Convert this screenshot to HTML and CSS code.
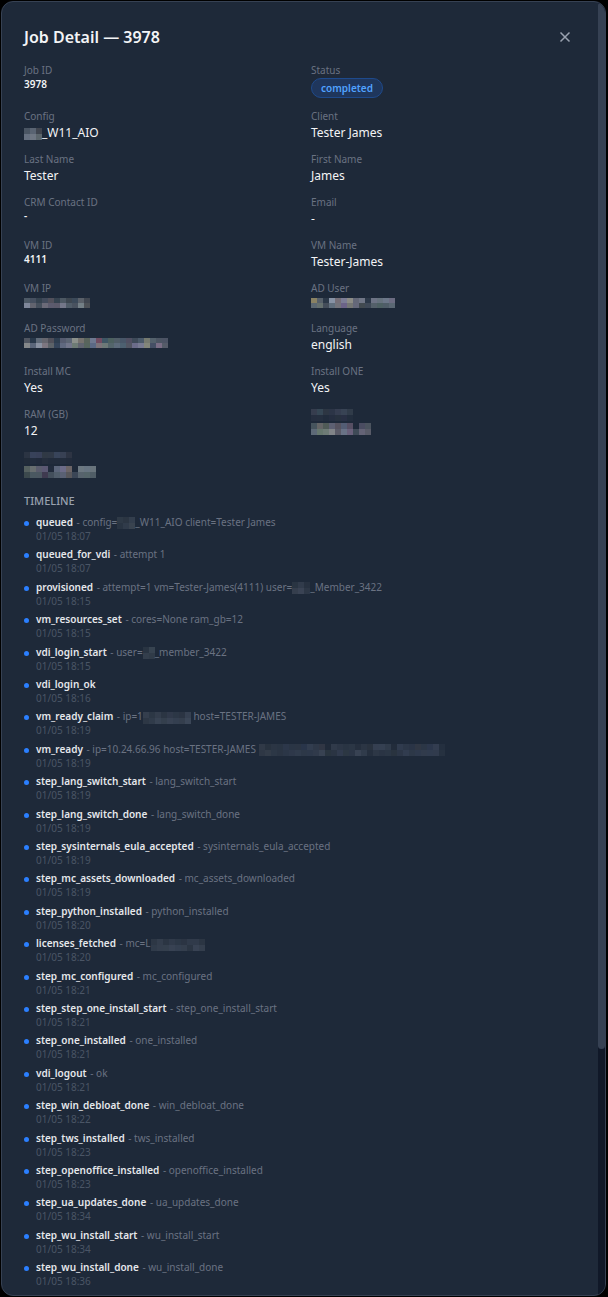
FILE: index.html
```
<!DOCTYPE html>
<html lang="en">
<head>
  <meta charset="UTF-8" />
  <meta name="viewport" content="width=device-width, initial-scale=1.0" />
  <title>Job Detail</title>
  <link rel="stylesheet" href="styles.css">
</head>
<body>
  <main class="modal">
    <div class="content">
      <header class="modal-header">
        <h1>Job Detail — 3978</h1>
        <button class="close" type="button" aria-label="Close">
          <svg width="12" height="12" viewBox="0 0 12 12"><path d="M1.5 1.5l9 9M10.5 1.5l-9 9" /></svg>
        </button>
      </header>

      <dl class="details">
        <div><dt>Job ID</dt><dd class="code">3978</dd></div>
        <div><dt>Status</dt><dd class="status"><span class="badge">completed</span></dd></div>
        <div><dt>Config</dt><dd><span class="mask" data-rows="4a5563 5a6472 40454f|667080 6f7783 5c666c"></span>_W11_AIO</dd></div>
        <div><dt>Client</dt><dd>Tester James</dd></div>
        <div><dt>Last Name</dt><dd>Tester</dd></div>
        <div><dt>First Name</dt><dd>James</dd></div>
        <div><dt>CRM Contact ID</dt><dd class="code">-</dd></div>
        <div><dt>Email</dt><dd>-</dd></div>
        <div><dt>VM ID</dt><dd class="code">4111</dd></div>
        <div><dt>VM Name</dt><dd>Tester-James</dd></div>
        <div><dt>VM IP</dt><dd class="hidden"><span class="mask short" data-rows="4d5966 465060 35424f 424b5c 51505b 35424f 4d5863 3d4650 3b4959 5a6069 404650|7f879a 62646f 454f5c 6b6a78 5c5b6e 5c5a6b 747789 505c68 49525f 737f86 4c5056"></span></dd></div>
        <div><dt>AD User</dt><dd class="hidden"><span class="mask short" data-rows="8a8263 57606a 2c3848 8792a5 766f78 7c7d96 8c8c86 646878 707686 2c3848 6d7385 66727e 6c7789 6c6c82|5c6872 65706f 444d5a 606e7d 73737b 6c6388 747674 65687a 424a50 3f4957 54606a 4d6063 4f5d68 5a6773"></span></dd></div>
        <div><dt>AD Password</dt><dd class="hidden"><span class="mask short" data-rows="505661 29384a 606a78 66666e 50505a 2e3e50 565c70 5d6675 8b908b 75726e 59645c 6e7890 704c62 3f5665 4c605f 505d67 485668 504f62 3e4a59 4b5a6a 767a70 54616c 4c5563 4c5364|85888a 5b667a 8991a1 7d7680 5c6268 34445a 606980 72768b 6d7b75 606470 56655e 5b6985 7c737a 6d7977 54656b 5c6a7a 4d6070 525562 6b6c8a 777a92 83867a 454f65 7a6d85 555b68"></span></dd></div>
        <div><dt>Language</dt><dd>english</dd></div>
        <div><dt>Install MC</dt><dd>Yes</dd></div>
        <div><dt>Install ONE</dt><dd>Yes</dd></div>
        <div><dt>RAM (GB)</dt><dd>12</dd></div>
        <div><dt><span class="mask" data-rows="363d4e 354654 2d3643 2c3547 353d50 384354 303b49|252e3f 252f3f 212c3c 252e40 27313f 282f43 222d3d"></span></dt><dd class="hidden"><span class="mask" data-rows="46545d 646566 505b57 5d6072 56535f 535d74 564f63 1e2939 4a4c61 4b535e|5d6977 66776e 6e7b76 818488 5b5b68 697286 69607b 3f4a57 646376 595b68"></span></dd></div>
        <div><dt><span class="mask" data-rows="2b3443 38425a 384058 303945 303947 38445a 384154 2d3443|212b39 222c3d 212a3b 252e3d 222c3c 222c3c 232d3d 222b3b"></span></dt><dd class="hidden"><span class="mask" data-rows="55605f 686e70 5a5c6d 5b5873 212b3c 5b657a 6c6b88 6c6567 1e2939 6c7881 687582 69747c|3c494d 4a5861 4b5761 3f3a50 434f5c 505d6b 5a6174 58575b 3b4656 57636d 55656a 505d66"></span></dd></div>
      </dl>

      <h2>Timeline</h2>
      <ul class="timeline">
        <li><p><b>queued</b> - config=<span class="mask" data-rows="2e3946 2b3542 333e4d|293442 303b4a 39434f"></span>_W11_AIO client=Tester James</p><time>01/05 18:07</time></li>
        <li><p><b>queued_for_vdi</b> - attempt 1</p><time>01/05 18:07</time></li>
        <li><p><b>provisioned</b> - attempt=1 vm=Tester-James(4111) user=<span class="mask" data-rows="293442 313b4b 273140|353e4d 3a4354 2d3746"></span>_Member_3422</p><time>01/05 18:15</time></li>
        <li><p><b>vm_resources_set</b> - cores=None ram_gb=12</p><time>01/05 18:15</time></li>
        <li><p><b>vdi_login_start</b> - user=<span class="mask" data-rows="293442 374350|333e4c 303b48"></span>_member_3422</p><time>01/05 18:15</time></li>
        <li><p><b>vdi_login_ok</b></p><time>01/05 18:16</time></li>
        <li><p><b>vm_ready_claim</b> - ip=1<span class="mask" data-rows="343e4d 2c3745 333d4c 2b3543 30394a 2c3746 2b3443 364051|2d3745 303b4a 384353 343f4d 384253 343f50 343e4d 3b4657"></span> host=TESTER-JAMES</p><time>01/05 18:19</time></li>
        <li><p><b>vm_ready</b> - ip=10.24.66.96 host=TESTER-JAMES <span class="mask" data-rows="303947 28323f 2b3544 293443 2c374a 2a3545 2b3544 29354a 323d4f 2e3848 303644 202a39 303a4a 2c3646 293443 2b3645 252f3e 2b3544 29323f 353f51 354052 303b4b 222c3b 303b4e 2c3748 2a3446 303744 2b3646 2c374c 333d50 242f3f|2e3745 323b48 2c3746 2a3443 2b3647 2e384a 303b4c 2d3848 2d384a 303a4b 384252 29343f 2a3443 303a4d 2c3743 2b3546 384253 303b4b 252f3e 2d3746 2a3444 2b3645 29333f 2c3647 313c4f 2d3848 2e394c 313b4c 303b4e 313b4d 263140"></span></p><time>01/05 18:19</time></li>
        <li><p><b>step_lang_switch_start</b> - lang_switch_start</p><time>01/05 18:19</time></li>
        <li><p><b>step_lang_switch_done</b> - lang_switch_done</p><time>01/05 18:19</time></li>
        <li><p><b>step_sysinternals_eula_accepted</b> - sysinternals_eula_accepted</p><time>01/05 18:19</time></li>
        <li><p><b>step_mc_assets_downloaded</b> - mc_assets_downloaded</p><time>01/05 18:19</time></li>
        <li><p><b>step_python_installed</b> - python_installed</p><time>01/05 18:20</time></li>
        <li><p><b>licenses_fetched</b> - mc=L<span class="mask" data-rows="2d3745 333d4c 2b3543 303a4a 2c3746 2b3443 303a4a 303a4a 2b3543|303b4a 343e4d 343f4d 384253 343f50 343e4d 2b3543 384253 343e4d"></span></p><time>01/05 18:20</time></li>
        <li><p><b>step_mc_configured</b> - mc_configured</p><time>01/05 18:21</time></li>
        <li><p><b>step_step_one_install_start</b> - step_one_install_start</p><time>01/05 18:21</time></li>
        <li><p><b>step_one_installed</b> - one_installed</p><time>01/05 18:21</time></li>
        <li><p><b>vdi_logout</b> - ok</p><time>01/05 18:21</time></li>
        <li><p><b>step_win_debloat_done</b> - win_debloat_done</p><time>01/05 18:22</time></li>
        <li><p><b>step_tws_installed</b> - tws_installed</p><time>01/05 18:23</time></li>
        <li><p><b>step_openoffice_installed</b> - openoffice_installed</p><time>01/05 18:23</time></li>
        <li><p><b>step_ua_updates_done</b> - ua_updates_done</p><time>01/05 18:34</time></li>
        <li><p><b>step_wu_install_start</b> - wu_install_start</p><time>01/05 18:34</time></li>
        <li><p><b>step_wu_install_done</b> - wu_install_done</p><time>01/05 18:36</time></li>
        <li><p><b>step_all_apps_completed_rebooted</b> - all_apps_completed_rebooted</p><time>01/05 18:36</time></li>
      </ul>
    </div>
    <div class="scrollbar"><div class="thumb"></div></div>
  </main>
  <script src="script.js"></script>
</body>
</html>
```
FILE: styles.css
```
* {
  box-sizing: border-box;
}
body {
  margin: 0;
  padding: 1px 2px 1px 1px;
  background: #000;
  color: #f3f4f6;
  font-family: "Segoe UI", "Noto Sans", sans-serif;
  font-size: 12px;
}
.modal {
  display: flex;
  height: calc(100vh - 2px);
  overflow: hidden;
  background: #1e2939;
  border: 1px solid #364153;
  border-radius: 12px;
}
.content {
  flex: 1;
  min-width: 0;
  display: flex;
  flex-direction: column;
  padding: 24px 22px 0;
}
.modal-header {
  display: flex;
  justify-content: space-between;
  align-items: center;
  height: 22px;
  margin-bottom: 15px;
}
h1 {
  margin: 0;
  font-size: 16px;
  font-weight: 600;
  color: #f3f4f6;
}
.close {
  display: flex;
  padding: 5px;
  border: none;
  background: none;
  cursor: pointer;
}
.close svg {
  fill: none;
  stroke: #99a1af;
  stroke-width: 1.5;
}
.details {
  display: grid;
  grid-template-columns: 1fr 1fr;
  gap: 10px 22px;
  margin: 0;
}
dt {
  height: 14px;
  font-size: 10px;
  line-height: 14px;
  color: #6a7282;
}
dd {
  margin: 0;
  line-height: 19px;
}
.code {
  font-size: 10px;
  line-height: 14px;
  font-weight: 600;
}
.status {
  height: 22px;
  padding-top: 1px;
}
.hidden {
  display: flex;
  align-items: center;
  height: 16px;
}
.badge {
  display: inline-block;
  height: 20px;
  padding: 0 9px;
  border: 1px solid #1e4a8c;
  border-radius: 10px;
  background: #1f365c;
  color: #51a2ff;
  font-size: 10px;
  font-weight: 600;
  line-height: 18px;
  vertical-align: top;
}
.mask {
  display: inline-flex;
  vertical-align: middle;
}
h2 {
  margin: 13px 0 6px;
  font-size: 11px;
  font-weight: 500;
  line-height: 16px;
  text-transform: uppercase;
  color: #99a1af;
}
/* rows share the height that is left, the last one runs under the edge */
.timeline {
  flex: 1;
  display: grid;
  grid-auto-rows: 1fr;
  margin: 0 0 -30px;
  padding: 0;
  list-style: none;
  font-size: 10px;
  line-height: 14px;
  color: #6a7282;
}
.timeline li {
  display: grid;
  grid-template-columns: 5px 1fr;
  align-content: start;
  column-gap: 7px;
}
.timeline li::before {
  content: "";
  height: 5px;
  margin-top: 6px;
  border-radius: 50%;
  background: #2b7fff;
}
.timeline p {
  height: 14px;
  margin: 0;
  white-space: nowrap;
}
.timeline b {
  margin-right: 1px;
  font-weight: 600;
  color: #e5e7eb;
}
.timeline time {
  grid-column: 2;
  color: #4a5565;
}
.scrollbar {
  width: 7px;
  background: #101828;
}
.thumb {
  height: 81%;
  border-radius: 4px;
  background: #364153;
}
```
FILE: script.js
```
// fill every masked value with its blocks of colour
document.querySelectorAll(".mask").forEach(function (mask) {
  const rows = mask.dataset.rows.split("|").map(r => r.split(" "));
  const rowHeight = mask.classList.contains("short") ? 5 : 6;
  const width = rows[0].length * 6;
  const height = rows.length * rowHeight;
  let rects = "";
  rows.forEach(function (row, y) {
    row.forEach(function (color, x) {
      rects += `<rect x="${x * 6}" y="${y * rowHeight}" width="6" height="${rowHeight}" fill="#${color}"/>`;
    });
  });
  mask.innerHTML = `<svg width="${width}" height="${height}" shape-rendering="crispEdges">${rects}</svg>`;
});
```
